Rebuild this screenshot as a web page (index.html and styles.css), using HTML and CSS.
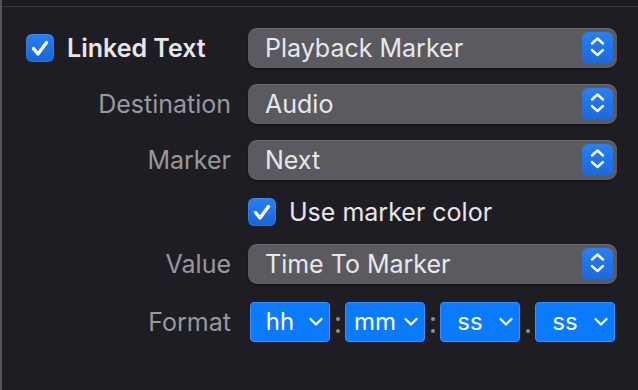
FILE: index.html
```html
<!DOCTYPE html>
<html lang="en">
<head>
  <meta charset="UTF-8">
  <title>Linked Text Inspector</title>
  <link rel="stylesheet" href="styles.css">
</head>
<body>
  <div class="panel">
    <div class="form">
      <!-- Linked text toggle -->
      <label class="check-label heading">
        <span class="checkbox">
          <svg viewBox="0 0 28 28" width="28" height="28"><path d="M7.5 14.5 L12 20 L20.5 8.5" fill="none" stroke="#fff" stroke-width="3.4" stroke-linecap="round" stroke-linejoin="round"/></svg>
        </span>
        Linked Text
      </label>
      <div class="popup"><span class="popup-text">Playback Marker</span><span class="stepper"></span></div>

      <div class="label">Destination</div>
      <div class="popup"><span class="popup-text">Audio</span><span class="stepper"></span></div>

      <div class="label">Marker</div>
      <div class="popup"><span class="popup-text">Next</span><span class="stepper"></span></div>

      <div></div>
      <label class="check-label option">
        <span class="checkbox">
          <svg viewBox="0 0 28 28" width="28" height="28"><path d="M7.5 14.5 L12 20 L20.5 8.5" fill="none" stroke="#fff" stroke-width="3.4" stroke-linecap="round" stroke-linejoin="round"/></svg>
        </span>
        Use marker color
      </label>

      <div class="label">Value</div>
      <div class="popup"><span class="popup-text">Time To Marker</span><span class="stepper"></span></div>

      <div class="label format-label">Format</div>
      <div class="format">
        <div class="unit"><span>hh</span><i class="caret"></i></div>
        <span class="sep"><b></b><b></b></span>
        <div class="unit"><span>mm</span><i class="caret"></i></div>
        <span class="sep"><b></b><b></b></span>
        <div class="unit"><span>ss</span><i class="caret"></i></div>
        <span class="sep dot"><b></b></span>
        <div class="unit"><span>ss</span><i class="caret"></i></div>
      </div>
    </div>
  </div>

  <script>
    // stepper + caret glyphs are the same everywhere, so fill them in once
    const stepperSvg = '<svg viewBox="0 0 31 32" width="31" height="32"><path d="M10 11.5 L15.5 6.5 L21 11.5 M10 18 L15.5 23 L21 18" fill="none" stroke="#fff" stroke-width="2.4" stroke-linecap="round" stroke-linejoin="round"/></svg>';
    const caretSvg = '<svg viewBox="0 0 14 10" width="14" height="10"><path d="M1.5 2 L7 7.5 L12.5 2" fill="none" stroke="#fff" stroke-width="2.2" stroke-linecap="round" stroke-linejoin="round"/></svg>';

    document.querySelectorAll(".stepper").forEach(el => el.innerHTML = stepperSvg);
    document.querySelectorAll(".caret").forEach(el => el.innerHTML = caretSvg);
  </script>
</body>
</html>
```

FILE: styles.css
```css
/* Dark inspector background */
body {
  margin: 0;
  padding: 0;
  height: 390px;
  background-color: #1f1d24;
  border-left: 2px solid #55545a;
  box-sizing: border-box;
  font-family: Inter, "Liberation Sans", sans-serif;
  overflow: hidden;
}

.panel {
  margin-top: 6px;
  border-top: 1px solid #38373d;
}

.form {
  display: grid;
  grid-template-columns: 205px 369px;
  column-gap: 17px;
  row-gap: 16px;
  padding: 21px 0 0 24px;
}

.label {
  align-self: center;
  text-align: right;
  font-size: 25px;
  color: #99989d;
  white-space: nowrap;
}

.check-label {
  display: flex;
  align-items: center;
  color: #e7e7e9;
  font-size: 25px;
  white-space: nowrap;
}

.heading {
  gap: 13px;
  font-weight: 600;
  height: 40px;
}

.option {
  gap: 13px;
  height: 32px;
}

.checkbox {
  width: 28px;
  height: 28px;
  flex-shrink: 0;
  border-radius: 6px;
  background: linear-gradient(#2a7ff2, #1765d8);
  box-shadow: inset 0 0 0 1px rgba(255, 255, 255, 0.08);
  display: flex;
}

/* Popup buttons */
.popup {
  height: 40px;
  border-radius: 9px;
  background-color: #5b5a60;
  box-shadow: inset 0 1px 0 rgba(255, 255, 255, 0.1), 0 1px 2px rgba(0, 0, 0, 0.5);
  display: flex;
  align-items: center;
  padding: 0 4px 0 17px;
}

.popup-text {
  flex: 1;
  font-size: 25px;
  color: #e8e8ea;
}

.stepper {
  width: 31px;
  height: 32px;
  border-radius: 6px;
  background: linear-gradient(#2a7ff1, #1a69da);
  display: flex;
}

/* Time format row */
.format-label {
  margin-top: 2px;
}

.format {
  display: flex;
  align-items: center;
  margin-top: 2px;
  padding-left: 2px;
  height: 40px;
}

.unit {
  width: 80px;
  height: 40px;
  box-sizing: border-box;
  border: 1px solid #3b8eff;
  border-radius: 4px;
  background-color: #0a7bff;
  display: flex;
  align-items: center;
  padding-right: 6px;
  color: #fff;
  font-size: 24px;
}

.unit span {
  flex: 1;
  text-align: center;
  padding-bottom: 1px;
}

.caret {
  display: flex;
  width: 14px;
}

.sep {
  width: 15px;
  align-self: stretch;
  display: flex;
  flex-direction: column;
  align-items: center;
  justify-content: flex-end;
  gap: 8px;
  padding-bottom: 9px;
  box-sizing: border-box;
}

.sep b {
  width: 4px;
  height: 4px;
  border-radius: 50%;
  background-color: #8f8e93;
}

.dot {
  padding-bottom: 9px;
}
```
